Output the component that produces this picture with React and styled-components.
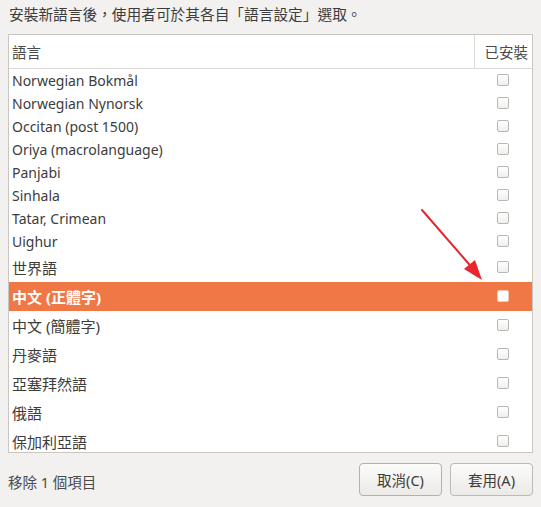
import styled, { createGlobalStyle } from "styled-components";

const GlobalStyle = createGlobalStyle`
  html, body {
    margin: 0;
    padding: 0;
    background: #f2f1f0;
  }
  body {
    font-family: "Noto Sans", "Noto Sans CJK TC", sans-serif;
    color: #3c3c3c;
  }
`;

const languages = [
  { name: "Norwegian Bokmål" },
  { name: "Norwegian Nynorsk" },
  { name: "Occitan (post 1500)" },
  { name: "Oriya (macrolanguage)" },
  { name: "Panjabi" },
  { name: "Sinhala" },
  { name: "Tatar, Crimean" },
  { name: "Uighur" },
  { name: "世界語", cjk: true },
  { name: "中文 (正體字)", cjk: true, selected: true },
  { name: "中文 (簡體字)", cjk: true },
  { name: "丹麥語", cjk: true },
  { name: "亞塞拜然語", cjk: true },
  { name: "俄語", cjk: true },
  { name: "保加利亞語", cjk: true },
];

export default function App() {
  return (
    <>
      <GlobalStyle />
      <Page>
        <Intro>安裝新語言後，使用者可於其各自「語言設定」選取。</Intro>
        <ListFrame>
          <HeaderRow>
            <HeaderCell>語言</HeaderCell>
            <HeaderCell $right>已安裝</HeaderCell>
          </HeaderRow>
          {languages.map((lang) => (
            <Row key={lang.name} $cjk={lang.cjk} $selected={lang.selected}>
              <NameCell $cjk={lang.cjk}>{lang.name}</NameCell>
              <CheckCell>
                <Checkbox $selected={lang.selected} />
              </CheckCell>
            </Row>
          ))}
        </ListFrame>
        <Footer>
          <Status>移除 1 個項目</Status>
          <Buttons>
            <Button $focus>取消(C)</Button>
            <Button>套用(A)</Button>
          </Buttons>
        </Footer>
        <Arrow width="80" height="90" viewBox="0 0 80 90">
          <line x1="3" y1="3" x2="56" y2="64" stroke="#e8262b" strokeWidth="2" strokeLinecap="round" />
          <polygon points="63,73 45,62 56,53" fill="#e8262b" />
        </Arrow>
      </Page>
    </>
  );
}

const Page = styled.div`
  position: relative;
  width: 541px;
  height: 507px;
  box-sizing: border-box;
  padding: 4px 8px 0 8px;
  display: flex;
  flex-direction: column;
`;

const Intro = styled.div`
  font-size: 14.7px;
  line-height: 20px;
  color: #3c3c3c;
  padding-left: 1px;
  height: 32px;
`;

const ListFrame = styled.div`
  width: 525px;
  height: 419px;
  flex-shrink: 0;
  box-sizing: border-box;
  border: 1px solid #c9c6c2;
  background: #ffffff;
  overflow: hidden;
`;

const HeaderRow = styled.div`
  display: grid;
  grid-template-columns: 1fr 58px;
  height: 33px;
  border-bottom: 1px solid #dcdad6;
`;

const HeaderCell = styled.div`
  display: flex;
  align-items: center;
  justify-content: ${(p) => (p.$right ? "flex-end" : "flex-start")};
  padding: ${(p) => (p.$right ? "0 4px 0 0" : "0 0 0 3px")};
  font-size: 14.5px;
  color: #4a4a4a;
  border-left: ${(p) => (p.$right ? "1px solid #dcdad6" : "none")};
`;

const Row = styled.div`
  display: grid;
  grid-template-columns: 1fr 58px;
  height: ${(p) => (p.$cjk ? "29px" : "23px")};
  background: ${(p) => (p.$selected ? "#f07746" : "transparent")};
  color: ${(p) => (p.$selected ? "#ffffff" : "#3c3c3c")};
  font-weight: ${(p) => (p.$selected ? 700 : 400)};
`;

const NameCell = styled.div`
  display: flex;
  align-items: center;
  padding-left: 3px;
  font-size: ${(p) => (p.$cjk ? "15px" : "14px")};
  white-space: nowrap;
`;

const CheckCell = styled.div`
  display: flex;
  align-items: center;
  justify-content: center;
`;

const Checkbox = styled.span`
  width: 10px;
  height: 10px;
  border: 1px solid ${(p) => (p.$selected ? "#f5c9b5" : "#b9b7b3")};
  border-radius: 2px;
  background: ${(p) => (p.$selected ? "#ffffff" : "linear-gradient(#ffffff, #f0efed)")};
`;

const Footer = styled.div`
  display: flex;
  align-items: center;
  justify-content: space-between;
  height: 58px;
  width: 525px;
`;

const Status = styled.div`
  font-size: 14.5px;
  color: #4a4a4a;
  padding-top: 4px;
`;

const Buttons = styled.div`
  display: flex;
  gap: 8px;
  padding-left: 1px;
`;

const Button = styled.button`
  width: 83px;
  height: 33px;
  box-sizing: border-box;
  border-radius: 4px;
  border: 1px solid ${(p) => (p.$focus ? "#d4a497" : "#bdbab5")};
  background: linear-gradient(#fbfbfa, #eceae7);
  font-family: "Noto Sans", "Noto Sans CJK TC", sans-serif;
  font-size: 14.5px;
  color: #3c3c3c;
  padding: 0;
`;

const Arrow = styled.svg`
  position: absolute;
  left: 419px;
  top: 207px;
`;
